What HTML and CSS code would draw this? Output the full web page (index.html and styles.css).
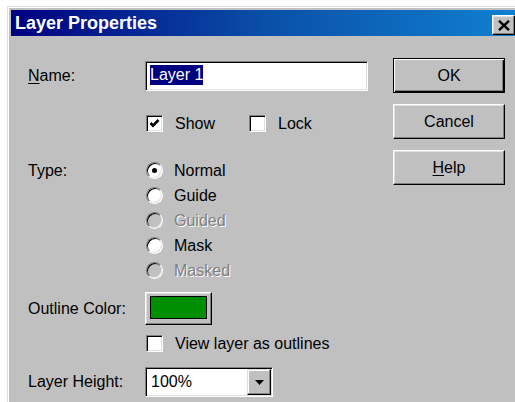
FILE: index.html
```html
<!DOCTYPE html>
<html lang="en">
<head>
<meta charset="utf-8">
<title>Layer Properties</title>
<link rel="stylesheet" href="styles.css">
</head>
<body>
<div class="dialog">
  <div class="titlebar">
    <span class="title">Layer Properties</span>
    <button class="close" type="button" aria-label="Close">
      <svg width="12" height="11" viewBox="0 0 12 11"><path d="M1 0.8 L11 10.2 M11 0.8 L1 10.2" stroke="#000" stroke-width="2.4" fill="none"/></svg>
    </button>
  </div>
  <div class="content">
    <div class="form">
      <div class="row row-name">
        <span class="label"><u>N</u>ame:</span>
        <div class="field name-field"><span class="sel">Layer 1</span></div>
      </div>

      <div class="row row-checks">
        <span class="label"></span>
        <div class="checks">
          <span class="check">
            <span class="box"><svg width="15" height="15" viewBox="0 0 15 15"><path d="M3.5 7 L6 9.6 L11.5 4" stroke="#000" stroke-width="2.6" fill="none"/></svg></span>
            Show
          </span>
          <span class="check check-lock">
            <span class="box"></span>
            Lock
          </span>
        </div>
      </div>

      <div class="row row-type">
        <span class="label label-type">Type:</span>
        <div class="radios">
          <div class="radio"><span class="dot on"></span>Normal</div>
          <div class="radio"><span class="dot"></span>Guide</div>
          <div class="radio disabled"><span class="dot"></span>Guided</div>
          <div class="radio"><span class="dot"></span>Mask</div>
          <div class="radio disabled"><span class="dot"></span>Masked</div>
        </div>
      </div>

      <div class="row row-outline">
        <span class="label">Outline Color:</span>
        <div><button class="colorbtn" type="button"><span class="swatch"></span></button></div>
      </div>

      <div class="row row-view">
        <span class="label"></span>
        <span class="check">
          <span class="box"></span>
          View layer as outlines
        </span>
      </div>

      <div class="row row-height">
        <span class="label">Layer Height:</span>
        <div>
          <div class="select">
            <span class="select-value">100%</span>
            <span class="arrow"><svg width="9" height="5" viewBox="0 0 9 5"><path d="M0 0 H9 L4.5 5 Z" fill="#000"/></svg></span>
          </div>
        </div>
      </div>
    </div>

    <div class="actions">
      <button class="btn default" type="button">OK</button>
      <button class="btn" type="button">Cancel</button>
      <button class="btn" type="button"><u>H</u>elp</button>
    </div>
  </div>
</div>
</body>
</html>
```

FILE: styles.css
```css
html, body {
  margin: 0;
  padding: 0;
  width: 515px;
  height: 402px;
  overflow: hidden;
  background: #fff;
}

body {
  font-family: "Liberation Sans", Arial, sans-serif;
  font-size: 16px;
  color: #000;
}

u {
  text-decoration: underline;
  text-underline-offset: 2px;
}

/* window frame */
.dialog {
  margin: 6px 0 0 7px;
  width: 508px;
  height: 396px;
  box-sizing: border-box;
  overflow: hidden;
  padding: 3px 0 0 3px;
  background: #c0c0c0;
  border-top: 1px solid #dfdfdf;
  border-left: 1px solid #dfdfdf;
  box-shadow: inset 1px 1px 0 #fff;
}

.titlebar {
  height: 26px;
  display: flex;
  align-items: flex-start;
  justify-content: space-between;
  background: linear-gradient(to right, #000080 0%, #0a4fa8 50%, #1080d0 100%);
}

.title {
  padding-left: 4px;
  line-height: 26px;
  font-size: 18px;
  font-weight: bold;
  color: #fff;
}

.close {
  margin: 5px 0 0 0;
  width: 23px;
  height: 20px;
  padding: 0 0 0 1px;
  display: flex;
  align-items: center;
  justify-content: center;
  background: #c0c0c0;
  border: 1px solid;
  border-color: #fff #000 #000 #fff;
  box-shadow: inset -1px -1px 0 #808080, inset 1px 1px 0 #dfdfdf;
}

/* dialog body */
.content {
  display: flex;
  align-items: flex-start;
}

.form {
  padding: 25px 0 0 17px;
  width: 340px;
}

.row {
  display: grid;
  grid-template-columns: 117px 223px;
  align-items: center;
}

.row-checks { margin-top: 24px; }
.row-type { margin-top: 26px; align-items: start; }
.row-outline { margin-top: 9px; }
.row-view { margin-top: 10px; }
.row-height { margin-top: 15px; }

.label-type { line-height: 25px; }

/* sunken text field */
.field {
  height: 30px;
  box-sizing: border-box;
  background: #fff;
  border: 1px solid;
  border-color: #808080 #fff #fff #808080;
  box-shadow: inset 1px 1px 0 #000, inset -1px -1px 0 #dfdfdf;
  padding: 3px 0 0 4px;
}

.sel {
  display: inline-block;
  height: 20px;
  line-height: 20px;
  background: #000080;
  color: #fff;
}

/* checkboxes */
.checks {
  display: flex;
  align-items: center;
}

.check {
  display: flex;
  align-items: center;
  height: 17px;
  margin-left: 1px;
}

.check-lock { margin-left: 34px; }

.box {
  width: 17px;
  height: 17px;
  box-sizing: border-box;
  margin-right: 12px;
  display: flex;
  align-items: center;
  justify-content: center;
  background: #fff;
  border: 1px solid;
  border-color: #808080 #fff #fff #808080;
  box-shadow: inset 1px 1px 0 #000, inset -1px -1px 0 #dfdfdf;
}

/* radio buttons */
.radios {
  display: flex;
  flex-direction: column;
}

.radio {
  height: 25px;
  display: flex;
  align-items: center;
  margin-left: 1px;
}

.dot {
  width: 17px;
  height: 17px;
  box-sizing: border-box;
  margin-right: 11px;
  border-radius: 50%;
  display: flex;
  align-items: center;
  justify-content: center;
  background: #fff;
  border: 1px solid;
  border-color: #808080 #fff #fff #808080;
  box-shadow: inset 1px 1px 0 #000, inset -1px -1px 0 #dfdfdf;
}

.dot.on::after {
  content: "";
  width: 5px;
  height: 5px;
  border-radius: 50%;
  background: #000;
}

.radio.disabled {
  color: #808080;
  text-shadow: 1px 1px 0 #fff;
}

.radio.disabled .dot {
  background: #c0c0c0;
}

/* colour picker button */
.colorbtn {
  width: 67px;
  height: 33px;
  padding: 3px 0 0 0;
  display: flex;
  justify-content: center;
  align-items: flex-start;
  background: #c0c0c0;
  border: 1px solid;
  border-color: #fff #000 #000 #fff;
  box-shadow: inset -1px -1px 0 #808080, inset 1px 1px 0 #dfdfdf;
}

.swatch {
  width: 57px;
  height: 23px;
  box-sizing: border-box;
  background: #008f00;
  border: 1px solid #000;
}

/* drop-down */
.select {
  width: 128px;
  height: 30px;
  box-sizing: border-box;
  display: flex;
  align-items: center;
  justify-content: space-between;
  background: #fff;
  border: 1px solid;
  border-color: #808080 #fff #fff #808080;
  box-shadow: inset 1px 1px 0 #000, inset -1px -1px 0 #dfdfdf;
  padding: 0 1px 0 5px;
}

.arrow {
  width: 24px;
  height: 26px;
  box-sizing: border-box;
  display: flex;
  align-items: center;
  justify-content: center;
  background: #c0c0c0;
  border: 1px solid;
  border-color: #dfdfdf #000 #000 #dfdfdf;
  box-shadow: inset -1px -1px 0 #808080, inset 1px 1px 0 #fff;
}

/* command buttons */
.actions {
  margin-left: 25px;
  padding-top: 22px;
  display: flex;
  flex-direction: column;
  gap: 11px;
}

.btn {
  width: 112px;
  height: 35px;
  padding: 0;
  font-family: inherit;
  font-size: 16px;
  color: #000;
  background: #c0c0c0;
  border: 1px solid;
  border-color: #fff #000 #000 #fff;
  box-shadow: inset -1px -1px 0 #808080, inset 1px 1px 0 #dfdfdf;
}

.btn.default {
  border-color: #000;
  box-shadow: inset 1px 1px 0 #fff, inset -1px -1px 0 #000, inset -2px -2px 0 #808080;
}
```
